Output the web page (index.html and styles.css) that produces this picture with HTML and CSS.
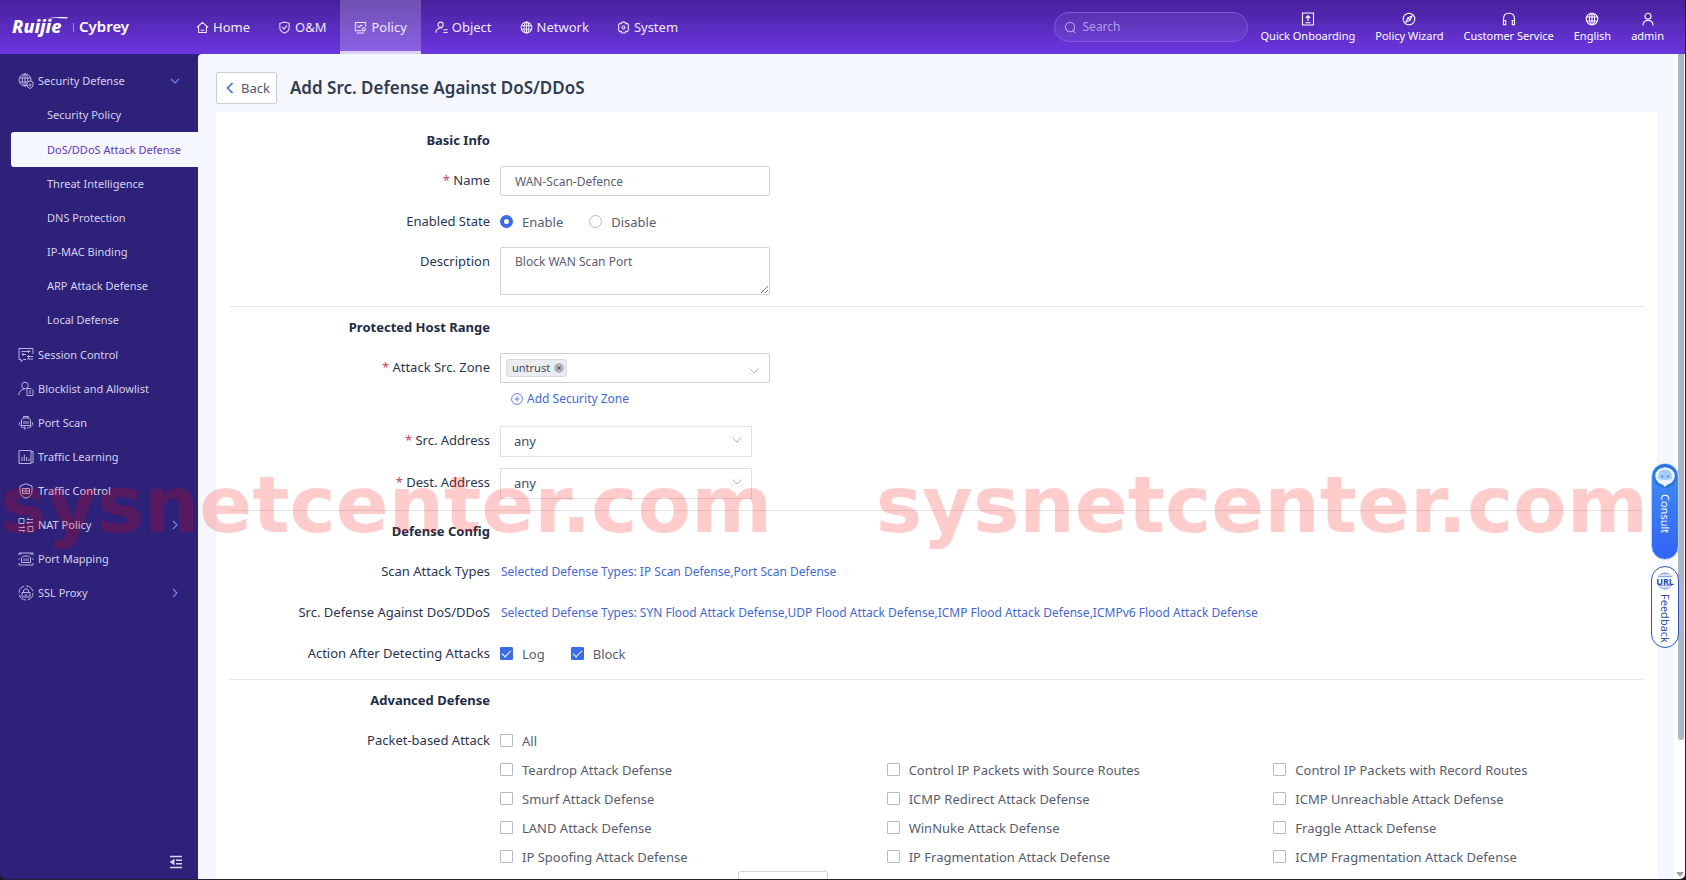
FILE: index.html
```html
<!DOCTYPE html>
<html lang="en">
<head>
<meta charset="utf-8">
<meta name="viewport" content="width=device-width, initial-scale=1">
<title>Add Src. Defense Against DoS/DDoS</title>
<link rel="stylesheet" href="styles.css">
</head>
<body>
<div class="app">
  <header class="topbar">
    <a class="logo" href="#" aria-label="Ruijie Cybrey">
      <svg width="120" height="26" viewBox="0 0 120 26">
        <text class="logo-ruijie" x="0" y="19">Ruijie</text>
        <path d="M34 4.500Q44 2.200 56 3.200L55 4.500Q44 3.500 34 4.500Z" fill="#fff"/>
        <path d="M61.500 9v9" stroke="#a98be8" stroke-width="1"/>
        <text class="logo-cybrey" x="67" y="18">Cybrey</text>
      </svg>
    </a>
    <nav class="nav" aria-label="Main">
      <a class="nav-item" href="#"><svg class="ic" viewBox="0 0 14 14"><path d="M1 7 7 1.500 13 7M2.800 5.800v6.700h8.400V5.800M5 10h4"/></svg>Home</a>
      <a class="nav-item" href="#"><svg class="ic" viewBox="0 0 14 14"><path d="M7 1 12 2.500V7.500Q12 11 7 13 2 11 2 7.500V2.500ZM4.500 6.500 6.500 8.500 9.700 5"/></svg>O&amp;M</a>
      <a class="nav-item nav-active" href="#" aria-current="page"><svg class="ic" viewBox="0 0 14 14"><path d="M12.500 6V1.500h-11v9H8M3 13h8M3.500 5 5.500 7 7.500 4.500 9 5.500"/><circle cx="10.500" cy="9" r="1.800"/></svg>Policy</a>
      <a class="nav-item" href="#"><svg class="ic" viewBox="0 0 14 14"><circle cx="6" cy="4" r="2.800"/><path d="M.8 13Q1 8 6 7.500M9 9.500h4.500M9 12.500h4.500M6 7l2 .5"/></svg>Object</a>
      <a class="nav-item" href="#"><svg class="ic" viewBox="0 0 14 14"><circle cx="7" cy="7" r="5.800"/><ellipse cx="7" cy="7" rx="2.600" ry="5.800"/><path d="M1.500 5h11M1.500 9h11M7 1v12"/></svg>Network</a>
      <a class="nav-item" href="#"><svg class="ic" viewBox="0 0 14 14"><path d="M5.500 1.200h3l.8 1.600 1.900-.2 1.500 2.600L11.700 7l1 1.800-1.500 2.600-1.900-.2-.8 1.600h-3l-.8-1.600-1.900.2L1.300 8.800l1-1.800-1-1.800 1.500-2.600 1.900.2Z"/><circle cx="7" cy="7" r="1.600"/></svg>System</a>
    </nav>
    <label class="search">
      <svg class="ic" viewBox="0 0 14 14"><circle cx="6.500" cy="6.500" r="5"/><path d="M10 10.500 12 13"/></svg>
      <input type="search" placeholder="Search" aria-label="Search">
    </label>
    <div class="tools">
      <a class="tool" href="#"><svg class="ic" viewBox="0 0 14 14"><path d="M1.500 1h11v12h-11ZM7 9V3.800M4.800 6 7 3.800 9.200 6M4.500 10.700h5"/></svg>Quick Onboarding</a>
      <a class="tool" href="#"><svg class="ic" viewBox="0 0 14 14"><circle cx="7" cy="7" r="5.800"/><path d="M10 4 8.200 8.200 4 10 5.800 5.800ZM5.800 5.800 8.200 8.200"/></svg>Policy Wizard</a>
      <a class="tool" href="#"><svg class="ic" viewBox="0 0 14 14"><path d="M1.500 11V7Q1.500 1.200 7 1.200T12.500 7v4M1.500 8.500h2.200v4.300H1.500ZM12.500 8.500h-2.200v4.300h2.200Z"/></svg>Customer Service</a>
      <a class="tool" href="#"><svg class="ic" viewBox="0 0 14 14"><circle cx="7" cy="7" r="5.800"/><ellipse cx="7" cy="7" rx="2.600" ry="5.800"/><path d="M1.500 5h11M1.500 9h11M7 1v12"/></svg>English</a>
      <a class="tool" href="#"><svg class="ic" viewBox="0 0 14 14"><circle cx="7" cy="4.300" r="3"/><path d="M2 13.500Q2 8.500 7 8.500t5 5"/></svg>admin</a>
    </div>
  </header>

  <div class="body">
    <aside class="sidebar">
      <ul class="menu">
        <li><a class="menu-item" href="#"><svg class="mic" viewBox="0 0 16 16"><circle cx="7" cy="7" r="6"/><ellipse cx="7" cy="7" rx="2.800" ry="6"/><path d="M1.300 5h11.500M1.300 9H9M7 1v12"/><path class="knock" d="M12 8 15 9v3q0 2.500-3 3.500-3-1-3-3.500V9ZM10.500 12h3M12 10.500v3"/></svg><span>Security Defense</span><svg class="chev" viewBox="0 0 10 10"><path d="M1 3 5 7 9 3"/></svg></a>
          <ul class="submenu">
            <li><a class="sub-item" href="#">Security Policy</a></li>
            <li><a class="sub-item sub-active" href="#" aria-current="page">DoS/DDoS Attack Defense</a></li>
            <li><a class="sub-item" href="#">Threat Intelligence</a></li>
            <li><a class="sub-item" href="#">DNS Protection</a></li>
            <li><a class="sub-item" href="#">IP-MAC Binding</a></li>
            <li><a class="sub-item" href="#">ARP Attack Defense</a></li>
            <li><a class="sub-item" href="#">Local Defense</a></li>
          </ul>
        </li>
        <li><a class="menu-item" href="#"><svg class="mic" viewBox="0 0 16 16"><path d="M15 7V1.500H1v11h2v2l2.500-2H8M3.500 4.500h9M10.500 3v3M4 7.500h4M5 6v3M9 9.500h6M9 12h6M10.500 8v3"/></svg><span>Session Control</span></a></li>
        <li><a class="menu-item" href="#"><svg class="mic" viewBox="0 0 16 16"><circle cx="7" cy="4.500" r="3.300"/><path d="M.7 14Q1.500 8.500 6.500 8M9 7.500h4l2 2v5H9ZM11 10h2M11 12h2"/></svg><span>Blocklist and Allowlist</span></a></li>
        <li><a class="menu-item" href="#"><svg class="mic" viewBox="0 0 16 16"><path d="M3.500 10.500V5l2-2h5l2 2v5.500ZM5.500 3V1.500h5V3M6 6v3M8 6v3M10 6v3M2 7Q-.5 9.500 3 11.500T7.500 13M14 7q2.500 2.500-1 4.500T9 13M6 11.500 7.700 13 6 14.500"/></svg><span>Port Scan</span></a></li>
        <li><a class="menu-item" href="#"><svg class="mic" viewBox="0 0 16 16"><path d="M1 1.500h12v13H1ZM13 2.500h2v11h-2M4 12V8M6.300 12V5.500M8.600 12V8M10.900 12V9.500"/></svg><span>Traffic Learning</span></a></li>
        <li><a class="menu-item" href="#"><svg class="mic" viewBox="0 0 16 16"><path d="M8 .8 14 3v5q0 5-6 7.300Q2 13 2 8V3ZM4.500 5.500h7v5h-7ZM4.500 8h7M8 5.500v5"/></svg><span>Traffic Control</span></a></li>
        <li><a class="menu-item" href="#"><svg class="mic" viewBox="0 0 16 16"><path d="M1 1.500h5v5H1ZM10 9.500h5v5h-5ZM15 2.500H9M15 5.500H9M10.500 1 8.700 2.500M10.500 7 8.700 5.500M.7 10.500h6M.7 13.500h6M5 9l1.800 1.500M5 15l1.800-1.500"/></svg><span>NAT Policy</span><svg class="chev" viewBox="0 0 10 10"><path d="M3 1 7 5 3 9"/></svg></a></li>
        <li><a class="menu-item" href="#"><svg class="mic" viewBox="0 0 16 16"><path d="M1 4V2h14v2M1 12v2h14v-2M3 2v2M13 2v2M3.500 11.500V7l2-2h5l2 2v4.500ZM6 7.500v2.500M8 7.500v2.500M10 7.500v2.500M.5 8h1.500M14 8h1.500"/></svg><span>Port Mapping</span></a></li>
        <li><a class="menu-item" href="#"><svg class="mic" viewBox="0 0 16 16"><circle cx="8" cy="8" r="7" stroke-dasharray="9 2"/><path d="M4 7.500h8v4.500H4ZM5.500 7.500V6Q5.500 3.800 8 3.800T10.500 6v1.500M6.500 10h3"/></svg><span>SSL Proxy</span><svg class="chev" viewBox="0 0 10 10"><path d="M3 1 7 5 3 9"/></svg></a></li>
      </ul>
      <button class="collapse" type="button" aria-label="Collapse menu">
        <svg width="14" height="14" viewBox="0 0 14 14"><path d="M1 1.500h12M7 5.200h6M7 8.800h6M1 12.500h12" stroke="#d9d5f5" stroke-width="1.500"/><path d="M.5 7 5.500 3.800v6.400Z" fill="#d9d5f5"/></svg>
      </button>
    </aside>

    <main class="main">
      <div class="page-head">
        <button class="back" type="button"><svg width="8" height="12" viewBox="0 0 8 12"><path d="M6.500 1 1.500 6l5 5" fill="none" stroke="#3f6be0" stroke-width="1.600"/></svg>Back</button>
        <h1 class="title">Add Src. Defense Against DoS/DDoS</h1>
      </div>
      <form class="card">
        <section class="section">
          <h2 class="section-title">Basic Info</h2>
          <div class="row"><label class="label required" for="name">Name</label>
            <div class="field"><input class="box" id="name" type="text" value="WAN-Scan-Defence"></div></div>
          <div class="row"><span class="label">Enabled State</span>
            <div class="field choices">
              <label class="choice"><input type="radio" name="state" checked>Enable</label>
              <label class="choice"><input type="radio" name="state">Disable</label>
            </div></div>
          <div class="row"><label class="label" for="desc">Description</label>
            <div class="field"><textarea class="box area" id="desc">Block WAN Scan Port</textarea></div></div>
        </section>

        <section class="section">
          <h2 class="section-title">Protected Host Range</h2>
          <div class="row"><span class="label required">Attack Src. Zone</span>
            <div class="field">
              <div class="box multi">
                <span class="chip">untrust<button class="chip-x" type="button" aria-label="Remove untrust"><svg width="10" height="10" viewBox="0 0 10 10"><circle cx="5" cy="5" r="5" fill="#b3b5bd"/><path d="M3.200 3.200l3.600 3.600M6.800 3.200 3.200 6.800" stroke="#4b4e58"/></svg></button></span>
                <button class="drop" type="button" aria-label="Open zone list"><svg class="arrow" viewBox="0 0 12 12"><path d="M1.500 3.500 6 8 10.500 3.500"/></svg></button>
              </div>
              <a class="add" href="#"><svg width="12" height="12" viewBox="0 0 12 12"><circle cx="6" cy="6" r="5.400"/><path d="M3.500 6h5M6 3.500v5"/></svg>Add Security Zone</a>
            </div></div>
          <div class="row"><label class="label required" for="src">Src. Address</label>
            <div class="field"><span class="pick"><select id="src"><option>any</option></select><svg class="arrow" viewBox="0 0 12 12"><path d="M1.500 3.500 6 8 10.500 3.500"/></svg></span></div></div>
          <div class="row"><label class="label required" for="dst">Dest. Address</label>
            <div class="field"><span class="pick"><select id="dst"><option>any</option></select><svg class="arrow" viewBox="0 0 12 12"><path d="M1.500 3.500 6 8 10.500 3.500"/></svg></span></div></div>
        </section>

        <section class="section">
          <h2 class="section-title">Defense Config</h2>
          <div class="row"><span class="label">Scan Attack Types</span>
            <div class="field"><a class="types" href="#">Selected Defense Types: IP Scan Defense,Port Scan Defense</a></div></div>
          <div class="row"><span class="label">Src. Defense Against DoS/DDoS</span>
            <div class="field"><a class="types" href="#">Selected Defense Types: SYN Flood Attack Defense,UDP Flood Attack Defense,ICMP Flood Attack Defense,ICMPv6 Flood Attack Defense</a></div></div>
          <div class="row"><span class="label">Action After Detecting Attacks</span>
            <div class="field choices">
              <label class="choice"><input type="checkbox" checked>Log</label>
              <label class="choice"><input type="checkbox" checked>Block</label>
            </div></div>
        </section>

        <section class="section">
          <h2 class="section-title">Advanced Defense</h2>
          <div class="row"><span class="label">Packet-based Attack</span>
            <div class="field">
              <label class="choice line"><input type="checkbox">All</label>
              <div class="grid">
                <label class="choice line"><input type="checkbox">Teardrop Attack Defense</label>
                <label class="choice line"><input type="checkbox">Control IP Packets with Source Routes</label>
                <label class="choice line"><input type="checkbox">Control IP Packets with Record Routes</label>
                <label class="choice line"><input type="checkbox">Smurf Attack Defense</label>
                <label class="choice line"><input type="checkbox">ICMP Redirect Attack Defense</label>
                <label class="choice line"><input type="checkbox">ICMP Unreachable Attack Defense</label>
                <label class="choice line"><input type="checkbox">LAND Attack Defense</label>
                <label class="choice line"><input type="checkbox">WinNuke Attack Defense</label>
                <label class="choice line"><input type="checkbox">Fraggle Attack Defense</label>
                <label class="choice line"><input type="checkbox">IP Spoofing Attack Defense</label>
                <label class="choice line"><input type="checkbox">IP Fragmentation Attack Defense</label>
                <label class="choice line"><input type="checkbox">ICMP Fragmentation Attack Defense</label>
              </div>
              <input class="box size" type="text" aria-label="Packet size">
            </div></div>
        </section>
      </form>
    </main>
    <div class="scroll"><div class="thumb"></div><div class="scroll-down"></div></div>
  </div>

  <div class="float">
    <button class="consult" type="button">
      <svg width="24" height="24" viewBox="0 0 22 22"><circle cx="11" cy="11" r="11" fill="#2f74dc"/><ellipse cx="11" cy="11" rx="9" ry="8" fill="#e8f3ff"/><path d="M8 18h6l-3 3Z" fill="#e8f3ff"/><path d="M4.500 13Q4.500 5 11 5T17.500 13Q11 16.500 4.500 13Z" fill="#a4cdf8"/><circle cx="8.500" cy="11.500" r="1" fill="#4a86e0"/><circle cx="13.500" cy="11.500" r="1" fill="#4a86e0"/></svg>
      <span class="vertical">Consult</span>
    </button>
    <button class="feedback" type="button">
      <svg width="20" height="20" viewBox="0 0 20 20"><g fill="none" stroke="#8fa6e6"><circle cx="10" cy="10" r="8"/><ellipse cx="10" cy="10" rx="4" ry="8"/><path d="M3 5.500h14M3 14.500h14M10 2v16"/></g><path d="M1 6.500h18v7H1Z" fill="#fff"/><text class="url" x="10" y="14" text-anchor="middle">URL</text></svg>
      <span class="vertical">Feedback</span>
    </button>
  </div>
  <div class="watermark" aria-hidden="true"><span>sysnetcenter.com</span><span>sysnetcenter.com</span></div>
</div>
</body>
</html>
```
FILE: styles.css
```css
* { box-sizing: border-box; }
body { margin: 0; background: #17171d; font: 13px/20px "Noto Sans", "Open Sans", sans-serif; color: #2a3550; }
a { color: inherit; text-decoration: none; }
button, input, select, textarea { font: inherit; color: inherit; margin: 0; }
button { cursor: pointer; }
h1, h2, ul { margin: 0; padding: 0; }
ul { list-style: none; }

.app { position: relative; display: flex; flex-direction: column; height: 100vh; overflow: hidden; border-right: 1px solid #22222c; border-bottom: 1px solid #22222c; border-radius: 0 0 6px 6px; }
.topbar { display: flex; flex: none; align-items: stretch; height: 54px; padding-right: 21px; color: #f1eafd; background: linear-gradient(#48209b, #6b37e0); }
.logo { display: flex; align-items: center; width: 182px; padding-left: 12px; }
.logo text { fill: #fff; }
.logo-ruijie { font: italic 800 18px "Noto Sans", sans-serif; }
.logo-cybrey { font: 600 15px "Noto Sans", sans-serif; }
.nav { display: flex; }
.nav-item { display: flex; align-items: center; gap: 4px; padding: 0 14px; white-space: nowrap; }
.nav-active { background: rgba(255, 255, 255, .22); box-shadow: inset 0 -3px #dccdf8; }
.ic { flex: none; width: 13px; height: 13px; fill: none; stroke: currentColor; stroke-width: 1.1; }
.search { display: flex; align-items: center; align-self: center; gap: 6px; width: 194px; height: 30px; margin-left: auto; padding: 0 9px; border: 1px solid #8257de; border-radius: 15px; background: rgba(255, 255, 255, .06); color: #c0a9ee; }
.search input { width: 100%; min-width: 0; padding: 0; border: 0; outline: 0; background: none; font-size: 12px; }
.search input::placeholder { color: #b49be8; opacity: 1; }
.tools { display: flex; gap: 20px; margin-left: 13px; }
.tool { display: flex; flex-direction: column; align-items: center; gap: 1px; padding-top: 12px; font-size: 11px; line-height: 18px; white-space: nowrap; color: #fff; }
.tool .ic { width: 14px; height: 14px; }

.body { display: flex; flex: 1; min-height: 0; background: #2e2179; }
.sidebar { display: flex; flex: none; flex-direction: column; justify-content: space-between; width: 198px; padding-top: 10px; color: #d5d1ee; font-size: 11px; }
.menu-item { display: flex; align-items: center; gap: 4px; height: 34px; padding: 0 18px; }
.menu-item span { flex: 1; }
.mic { flex: none; width: 16px; height: 16px; fill: none; stroke: #b9b3e2; stroke-width: 1; }
.knock { fill: #2e2179; }
.chev { width: 10px; height: 10px; fill: none; stroke: #6a85ee; stroke-width: 1.2; }
.submenu { padding-bottom: 1px; }
.sub-item { display: flex; align-items: center; height: 34px; margin-left: 11px; padding-left: 36px; }
.sub-active { height: 35px; border-radius: 3px 0 0 3px; background: #f4f8fe; color: #6633b9; }
.collapse { align-self: flex-end; display: flex; margin: 0 15px 10px; padding: 0; border: 0; background: none; }

.main { flex: 1; min-width: 0; padding: 18px 17px 0 18px; overflow: hidden; border-radius: 4px 0 0 0; background: #f4f8fe; }
.page-head { display: flex; align-items: center; gap: 13px; margin-bottom: 8px; }
.back { display: flex; align-items: center; gap: 7px; height: 32px; padding: 0 6px 0 9px; border: 1px solid #c9d0d9; border-radius: 2px; background: #fff; color: #51586a; }
.title { font-size: 17px; line-height: 28px; font-weight: 600; color: #333b4e; }
.card { padding: 8px 13px 0; background: #fff; }
.section { display: flex; flex-direction: column; gap: 11px; padding: 5px 0 11px; border-bottom: 1px solid #e3e5e9; }
.section-title { width: 261px; text-align: right; font-size: 13px; line-height: 30px; font-weight: 700; color: #212c45; }
.row { display: grid; grid-template-columns: 261px 1fr; column-gap: 10px; }
.label { line-height: 28px; text-align: right; white-space: nowrap; }
.required::before { content: "* "; color: #cb4356; }
.box { display: block; width: 270px; height: 30px; padding: 0 14px; border: 1px solid #cfd3d9; border-radius: 2px; outline: 0; background: #fff; color: #5b6070; font-size: 12px; }
.area { height: 48px; padding: 4px 14px; }
.choices { display: flex; gap: 26px; height: 29px; }
.choice { display: flex; align-items: center; gap: 9px; color: #565d6e; white-space: nowrap; }
.choice input { appearance: none; flex: none; display: grid; place-items: center; width: 13px; height: 13px; border: 1px solid #b4bac4; background: #fff; }
.choice input[type="checkbox"] { border-radius: 1px; }
.choice input[type="radio"] { border-radius: 50%; }
.choice input[type="radio"]:checked { border: 4px solid #3a6cea; }
.choice input[type="checkbox"]:checked { border-color: #3a6cea; background: #3a6cea; }
.choice input[type="checkbox"]:checked::before { content: ""; width: 8px; height: 4px; margin-bottom: 3px; border: solid #fff; border-width: 0 0 1px 1px; transform: rotate(-45deg); }
.line { height: 29px; }
.grid { display: grid; grid-template-columns: repeat(3, 1fr); column-gap: 16px; }
.multi { display: flex; justify-content: space-between; padding: 5px 9px 0 5px; }
.chip { display: flex; align-items: center; gap: 4px; height: 18px; padding: 0 2px 0 5px; border: 1px solid #d8d9de; border-radius: 3px; background: #ebecef; color: #454b5a; font-size: 11px; }
.chip-x, .drop { display: flex; padding: 0; border: 0; background: none; }
.drop { align-items: center; }
.arrow { width: 12px; height: 12px; fill: none; stroke: #b3b9c4; }
.add { display: flex; align-items: center; gap: 4px; height: 32px; padding-left: 11px; color: #4369cf; font-size: 12px; }
.add svg { fill: none; stroke: #5f82dd; }
.pick { display: flex; position: relative; width: 252px; }
.pick select { appearance: none; width: 100%; height: 31px; padding: 0 13px 1px; border: 1px solid #dcdfe4; border-radius: 0; outline: 0; background: #fff; color: #454c5e; }
.pick .arrow { position: absolute; right: 9px; top: 8px; pointer-events: none; }
.types { display: block; padding-left: 1px; color: #4369cf; font-size: 12px; line-height: 30px; }
.size { width: 90px; margin: 0 0 0 238px; }

.scroll { display: flex; flex: none; flex-direction: column; justify-content: space-between; align-items: flex-end; width: 11px; padding: 0 1px 2px 0; background: #fff; }
.thumb { width: 6px; height: 83.4%; border-radius: 0 0 3px 3px; background: #abb4c8; }
.scroll-down { border: solid transparent; border-width: 5px 4px 0; border-top-color: #9ea3ad; }

.float { position: absolute; right: 6px; top: 463px; display: flex; flex-direction: column; align-items: center; gap: 6px; }
.float button { display: flex; flex-direction: column; align-items: center; width: 28px; padding: 0; font-size: 11px; line-height: 14px; }
.consult { height: 97px; gap: 6px; border: 1px solid #b9d4fb; border-radius: 14px; background: linear-gradient(#3f8ff0, #3463f5); color: #fff; }
.feedback { height: 82px; gap: 3px; border: 1px solid #2f55b5; border-radius: 14px; background: #fff; color: #2d4fa8; }
.float .feedback { padding-top: 4px; }
.vertical { writing-mode: vertical-rl; white-space: nowrap; }
.url { font: 700 9px "Noto Sans", sans-serif; fill: #2347ae; }

.watermark { position: absolute; left: 0; right: 0; top: 463px; display: flex; justify-content: space-between; padding: 0 37px 0 0; pointer-events: none; font: 700 78px/84px "DejaVu Sans", sans-serif; color: rgba(255, 0, 0, .2); }
```
